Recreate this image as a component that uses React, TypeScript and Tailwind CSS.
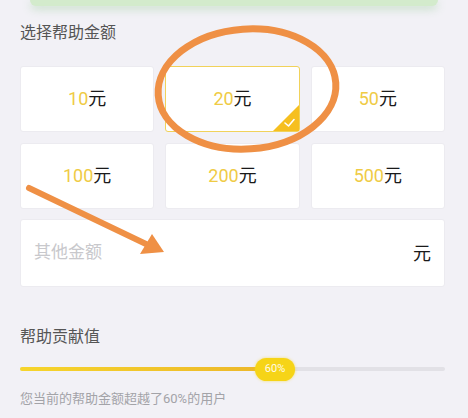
import React from 'react';

const amounts = [10, 20, 50, 100, 200, 500];

function AmountCard({ value, selected }: { value: number; selected?: boolean }) {
  return (
    <div
      className={`relative h-[66px] rounded-[3px] bg-white flex items-center justify-center ${
        selected ? 'border border-[#f1d25a]' : 'border border-[#ecebf0]'
      }`}
    >
      <span className="text-[18px] leading-none">
        <span className="text-[#efcb45]">{value}</span>
        <span className="text-[#1a1a1a]">元</span>
      </span>
      {selected && (
        <svg className="absolute right-0 bottom-0" width="26" height="26" viewBox="0 0 26 26">
          <polygon points="26,0 26,26 0,26" fill="#f6bf1f" />
          <path d="M12 18 L15.5 21 L21 14.5" stroke="#fff" strokeWidth="1.6" fill="none" strokeLinecap="round" strokeLinejoin="round" />
        </svg>
      )}
    </div>
  );
}

export default function App() {
  const percent = 60;
  return (
    <div
      className="relative w-[468px] h-[418px] overflow-hidden bg-[#f2f1f6]"
      style={{ fontFamily: "Roboto, 'Noto Sans CJK SC', sans-serif" }}
    >
      {/* green card edge from above */}
      <div className="mx-[30px] h-[6px] rounded-b-[6px] bg-[#d3ebcc] shadow-[0_3px_8px_rgba(140,200,140,0.45)]" />

      <div className="pl-[20px] pr-[23px]">
        <div className="mt-[17px] text-[16px] leading-[20px] text-[#555]">选择帮助金额</div>

        <div className="mt-[23px] grid grid-cols-3 gap-x-[11px] gap-y-[11px]">
          {amounts.map((a) => (
            <AmountCard key={a} value={a} selected={a === 20} />
          ))}
        </div>

        <div className="mt-[10px] h-[68px] rounded-[3px] bg-white border border-[#ecebf0] flex items-center justify-between pl-[13px] pr-[13px]">
          <span className="text-[17px] text-[#c8c8cc]">其他金额</span>
          <span className="text-[18px] text-[#1a1a1a]">元</span>
        </div>

        <div className="mt-[40px] text-[16px] leading-[20px] text-[#555]">帮助贡献值</div>

        {/* slider */}
        <div className="relative mt-[10px] h-[24px] flex items-center">
          <div className="w-full h-[4px] rounded-full bg-[#e2e1e6]">
            <div
              className="h-full rounded-full bg-gradient-to-r from-[#f6d52c] to-[#ecb62a]"
              style={{ width: `${percent}%` }}
            />
          </div>
          <div
            className="absolute top-[1px] h-[23px] w-[40px] -ml-[20px] rounded-full bg-[#f6d417] flex items-center justify-center text-[11px] text-white/90 shadow-[0_0_3px_rgba(246,212,23,0.6)]"
            style={{ left: `${percent}%` }}
          >
            60%
          </div>
        </div>

        <div className="mt-[10px] text-[13px] leading-[16px] text-[#a3a3a8]">您当前的帮助金额超越了60%的用户</div>
      </div>

      {/* hand-drawn annotations */}
      <svg className="absolute inset-0 pointer-events-none" width="468" height="418" viewBox="0 0 468 418">
        <ellipse
          cx="247"
          cy="89"
          rx="89"
          ry="60"
          transform="rotate(-4 247 89)"
          fill="none"
          stroke="#ef9045"
          strokeWidth="7"
        />
        <line x1="29" y1="188" x2="146" y2="244" stroke="#ef9045" strokeWidth="6" strokeLinecap="round" />
        <polygon points="140,254 152,234 164,252" fill="#ef9045" />
      </svg>
    </div>
  );
}
